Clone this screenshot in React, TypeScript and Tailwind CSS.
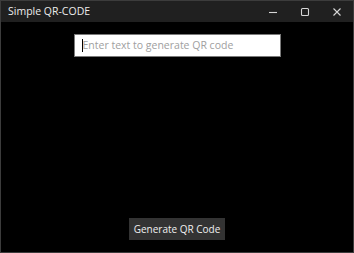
const App = () => {
  return (
    <div className="w-[354px] h-[253px] flex flex-col bg-black border border-[#3c3c3c] font-['Open_Sans',sans-serif] overflow-hidden">
      <div className="h-[21px] shrink-0 bg-[#202020] flex items-center justify-between pl-[7px]">
        <span className="text-[10.5px] text-[#ececec] whitespace-nowrap">Simple QR-CODE</span>
        <div className="flex items-center h-full">
          <div className="w-[32px] h-full flex items-center justify-center">
            <svg width="10" height="10" viewBox="0 0 10 10">
              <path d="M1 5.5H9" stroke="#d6d6d6" strokeWidth="1.1" />
            </svg>
          </div>
          <div className="w-[32px] h-full flex items-center justify-center">
            <svg width="10" height="10" viewBox="0 0 10 10">
              <rect x="1.5" y="1.5" width="7" height="7" rx="1" fill="none" stroke="#d6d6d6" strokeWidth="1.1" />
            </svg>
          </div>
          <div className="w-[32px] h-full flex items-center justify-center">
            <svg width="10" height="10" viewBox="0 0 10 10">
              <path d="M1.5 1.5L8.5 8.5M8.5 1.5L1.5 8.5" stroke="#d6d6d6" strokeWidth="1.1" />
            </svg>
          </div>
        </div>
      </div>
      <div className="flex-1 flex flex-col items-center justify-between pt-[12px] pb-[12px]">
        <div className="w-[207px] h-[23px] bg-white border border-[#7a7a7a] flex items-center pl-[8px] relative">
          <span className="absolute left-[7px] top-[4px] w-px h-[13px] bg-black" />
          <span className="text-[10.5px] text-[#a0a0a0] whitespace-nowrap">Enter text to generate QR code</span>
        </div>
        <button className="w-[96px] h-[22px] bg-[#333333] text-[10px] text-[#f0f0f0] whitespace-nowrap flex items-center justify-center">
          Generate QR Code
        </button>
      </div>
    </div>
  );
};

export default App;
